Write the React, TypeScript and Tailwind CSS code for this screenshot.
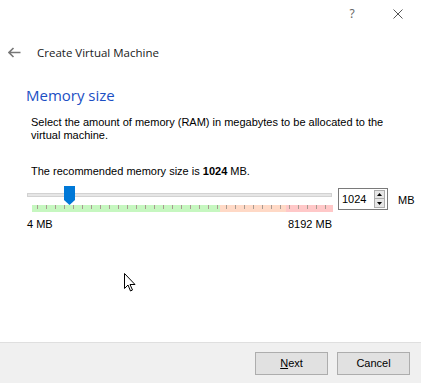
import React from "react";

const ticks = Array.from({ length: 33 }, (_, i) => 32 + i * 9).filter((x) => x <= 327);

function TickBand() {
  return (
    <svg width="301" height="7" className="block">
      <rect x="0" y="0" width="188" height="7" fill="#c6f7c0" />
      <rect x="188" y="0" width="66" height="7" fill="#ffd9c6" />
      <rect x="254" y="0" width="47" height="7" fill="#ffc8c8" />
      {ticks.map((x) => (
        <rect key={x} x={x - 27} y="0" width="1" height="4" fill="#a89a90" />
      ))}
    </svg>
  );
}

function Cursor() {
  return (
    <svg width="14" height="20" viewBox="0 0 14 20" className="absolute left-[124px] top-[273px]">
      <path
        d="M0.5 0.5 L0.5 15.5 L4 12 L6.5 18 L8.5 17 L6 11.5 L11 11.5 Z"
        fill="#fff"
        stroke="#000"
        strokeWidth="1"
        strokeLinejoin="miter"
      />
    </svg>
  );
}

export default function App() {
  return (
    <div
      className="relative flex h-[383px] w-[421px] flex-col bg-white text-[#000] overflow-hidden"
      style={{ fontFamily: '"Liberation Sans", Arial, sans-serif' }}
    >
      <div className="flex h-[28px] items-center justify-end">
        <div className="flex w-[46px] justify-center text-[12px] text-[#666]" style={{ fontFamily: '"Noto Sans", sans-serif' }}>
          ?
        </div>
        <div className="flex w-[46px] justify-center">
          <svg width="10" height="10" viewBox="0 0 10 10">
            <path d="M0.5 0.5 L9.5 9.5 M9.5 0.5 L0.5 9.5" stroke="#555" strokeWidth="1" />
          </svg>
        </div>
      </div>

      <div className="mt-[16px] flex items-center">
        <svg width="13" height="11" viewBox="0 0 13 11" className="ml-[8px]">
          <path d="M1 5.5 H12.5 M5.5 1 L1 5.5 L5.5 10" stroke="#777" strokeWidth="1.6" fill="none" />
        </svg>
        <span className="ml-[16px] text-[11.5px] text-[#1a1a1a]" style={{ fontFamily: '"Open Sans", sans-serif' }}>
          Create Virtual Machine
        </span>
      </div>

      <div className="ml-[26px] mt-[23px] text-[15px] text-[#1c4fc4]" style={{ fontFamily: '"Open Sans", sans-serif' }}>
        Memory size
      </div>

      <div className="ml-[31px] mt-[9px] w-[370px] text-[11px] leading-[13px]">
        Select the amount of memory (RAM) in megabytes to be allocated to the virtual machine.
      </div>
      <div className="ml-[31px] mt-[23px] text-[11px] leading-[13px]">
        The recommended memory size is <b>1024</b> MB.
      </div>

      <div className="ml-[27px] mt-[8px] flex items-start">
        <div className="flex w-[305px] flex-col">
          <div className="relative h-[19px]">
            <div className="absolute left-0 right-0 top-[7px] h-[4px] border border-[#d2d2d2] bg-[#e6e6e6]" />
            <svg width="11" height="19" viewBox="0 0 11 19" className="absolute left-[37px] top-0">
              <path d="M0 0 H11 V14 L5.5 19 L0 14 Z" fill="#0078d7" />
            </svg>
          </div>
          <div className="ml-[5px] mt-[0px]">
            <TickBand />
          </div>
          <div className="mt-[6px] flex justify-between text-[11px] leading-[13px]">
            <span>4 MB</span>
            <span>8192 MB</span>
          </div>
        </div>
        <div className="ml-[6px] mt-[2px] flex h-[22px] w-[50px] items-center border border-[#7a7a7a] bg-white">
          <span className="ml-[3px] flex-1 text-[11px]">1024</span>
          <div className="mr-[2px] flex h-[18px] w-[11px] flex-col border border-[#adadad] bg-[#e6e6e6]">
            <div className="flex flex-1 items-center justify-center border-b border-[#adadad]">
              <svg width="5" height="3" viewBox="0 0 5 3"><path d="M0 3 L2.5 0 L5 3 Z" fill="#000" /></svg>
            </div>
            <div className="flex flex-1 items-center justify-center">
              <svg width="5" height="3" viewBox="0 0 5 3"><path d="M0 0 L2.5 3 L5 0 Z" fill="#000" /></svg>
            </div>
          </div>
        </div>
        <span className="ml-[10px] mt-[6px] text-[11px]">MB</span>
      </div>

      <div className="flex-1" />

      <div className="flex h-[41px] items-center justify-end gap-[9px] border-t border-[#dfdfdf] bg-[#f0f0f0] pr-[11px]">
        <button className="h-[23px] w-[73px] border border-[#adadad] bg-[#e1e1e1] text-[11px]">
          <span className="underline">N</span>ext
        </button>
        <button className="h-[23px] w-[73px] border border-[#adadad] bg-[#e1e1e1] text-[11px]">
          Cancel
        </button>
      </div>

      <Cursor />
    </div>
  );
}
